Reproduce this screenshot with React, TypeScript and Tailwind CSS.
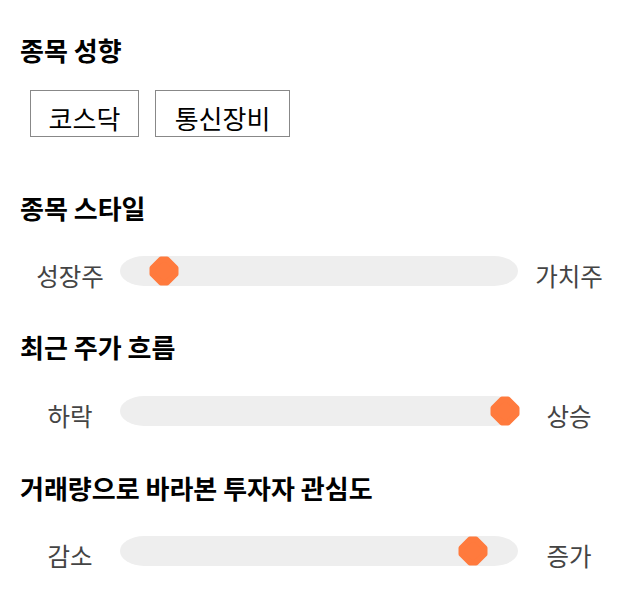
import React from 'react';

const font = { fontFamily: '"Noto Sans CJK KR", "Noto Sans", sans-serif' };

interface SliderRowProps {
  left: string;
  right: string;
  thumbX: number;
}

function Thumb() {
  return (
    <svg width="30" height="30" viewBox="0 0 30 30">
      <polygon
        points="12,3.5 18,3.5 26.5,12 26.5,18 18,26.5 12,26.5 3.5,18 3.5,12"
        fill="#ff7a3d"
        stroke="#ff7a3d"
        strokeWidth="6"
        strokeLinejoin="round"
      />
    </svg>
  );
}

function SliderRow({ left, right, thumbX }: SliderRowProps) {
  return (
    <div className="flex items-center h-[30px]">
      <div className="w-[100px] pt-[9px] text-center text-[24.5px] leading-[30px] text-[#444444]">{left}</div>
      <div className="relative w-[398px] h-[30px] bg-[#eeeeee] rounded-[24px/15px]">
        <div className="absolute top-0" style={{ left: thumbX - 15 }}>
          <Thumb />
        </div>
      </div>
      <div className="w-[102px] pt-[9px] text-center text-[24.5px] leading-[30px] text-[#444444]">{right}</div>
    </div>
  );
}

export default function App() {
  return (
    <div className="w-[640px] h-[606px] bg-white px-5 pt-[34px]" style={font}>
      <h2 className="text-[26px] leading-[32px] font-bold text-black">종목 성향</h2>
      <div className="flex gap-4 ml-[10px] mt-6">
        <div className="w-[109px] h-[47px] pt-[8px] border border-[#888888] flex items-center justify-center text-[26px] text-black">
          코스닥
        </div>
        <div className="w-[135px] h-[47px] pt-[8px] border border-[#888888] flex items-center justify-center text-[26px] text-black">
          통신장비
        </div>
      </div>

      <h2 className="mt-[55px] text-[26px] leading-[32px] font-bold text-black">종목 스타일</h2>
      <div className="mt-8">
        <SliderRow left="성장주" right="가치주" thumbX={44} />
      </div>

      <h2 className="mt-[45px] text-[26px] leading-[32px] font-bold text-black">최근 주가 흐름</h2>
      <div className="mt-[33px]">
        <SliderRow left="하락" right="상승" thumbX={385} />
      </div>

      <h2 className="mt-[46px] text-[26px] leading-[32px] font-bold text-black">거래량으로 바라본 투자자 관심도</h2>
      <div className="mt-8">
        <SliderRow left="감소" right="증가" thumbX={353} />
      </div>
    </div>
  );
}
